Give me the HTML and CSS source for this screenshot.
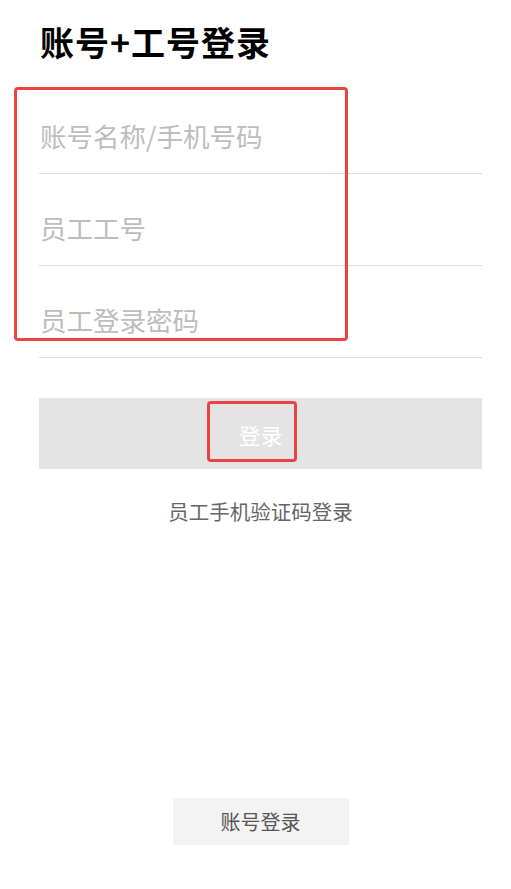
FILE: index.html
```html
<!DOCTYPE html>
<html lang="zh-CN">
<head>
<meta charset="utf-8">
<title>账号+工号登录</title>
<link rel="stylesheet" href="styles.css">
</head>
<body>
<div class="page">
  <h1 class="title">账号+工号登录</h1>
  <form class="form">
    <div class="field"><input class="input" type="text" placeholder="账号名称/手机号码"></div>
    <div class="field"><input class="input" type="text" placeholder="员工工号"></div>
    <div class="field"><input class="input" type="password" placeholder="员工登录密码"></div>
    <span class="mark mark-fields"></span>
    <button type="button" class="submit"><span class="submit-label">登录<span class="mark mark-btn"></span></span></button>
  </form>
  <a class="alt-link">员工手机验证码登录</a>
  <div class="bottom">
    <button type="button" class="account-btn">账号登录</button>
  </div>
</div>
</body>
</html>
```
FILE: styles.css
```css
* { box-sizing: border-box; }
html, body { margin: 0; padding: 0; background: #fff; }
body { font-family: "Noto Sans CJK SC", "Noto Sans", sans-serif; }
.page {
  min-height: 889px;
  display: flex;
  flex-direction: column;
  padding: 0 29px 0 39px;
}
.title {
  margin: 20px 0 0 1px;
  font-size: 34px;
  line-height: 44px;
  letter-spacing: 1px;
  font-weight: 700;
  color: #000;
}
.form {
  position: relative;
  margin-top: 18px;
  display: flex;
  flex-direction: column;
}
.field {
  padding: 33px 0 18px;
  border-bottom: 1px solid #dcdcdc;
}
.input {
  display: block;
  width: 100%;
  height: 40px;
  border: 0;
  outline: none;
  padding: 0 0 0 1px;
  font-family: inherit;
  font-size: 26.5px;
  color: #333;
  background: transparent;
}
.input::placeholder { color: #bdbdbd; }
.mark {
  position: absolute;
  border: 3px solid #ea4343;
  border-radius: 4px;
  pointer-events: none;
}
.mark-fields {
  left: -25px;
  top: 5px;
  width: 334px;
  height: 254px;
}
.submit {
  margin-top: 40px;
  height: 71px;
  border: 0;
  background: #e4e4e4;
  font-family: inherit;
  font-size: 22px;
  color: #fff;
  display: flex;
  align-items: center;
  justify-content: center;
  padding: 0;
}
.submit-label { position: relative; line-height: 30px; }
.mark-btn {
  left: -31px;
  top: -18px;
  width: 90px;
  height: 61px;
}
.alt-link {
  margin-top: 29px;
  align-self: center;
  font-size: 20.5px;
  line-height: 26px;
  color: #666;
}
.bottom {
  margin-top: auto;
  padding-bottom: 44px;
  display: flex;
  justify-content: center;
}
.account-btn {
  width: 176px;
  height: 47px;
  border: 0;
  background: #f3f3f3;
  font-family: inherit;
  font-size: 20px;
  color: #555;
  padding: 0;
}
```
